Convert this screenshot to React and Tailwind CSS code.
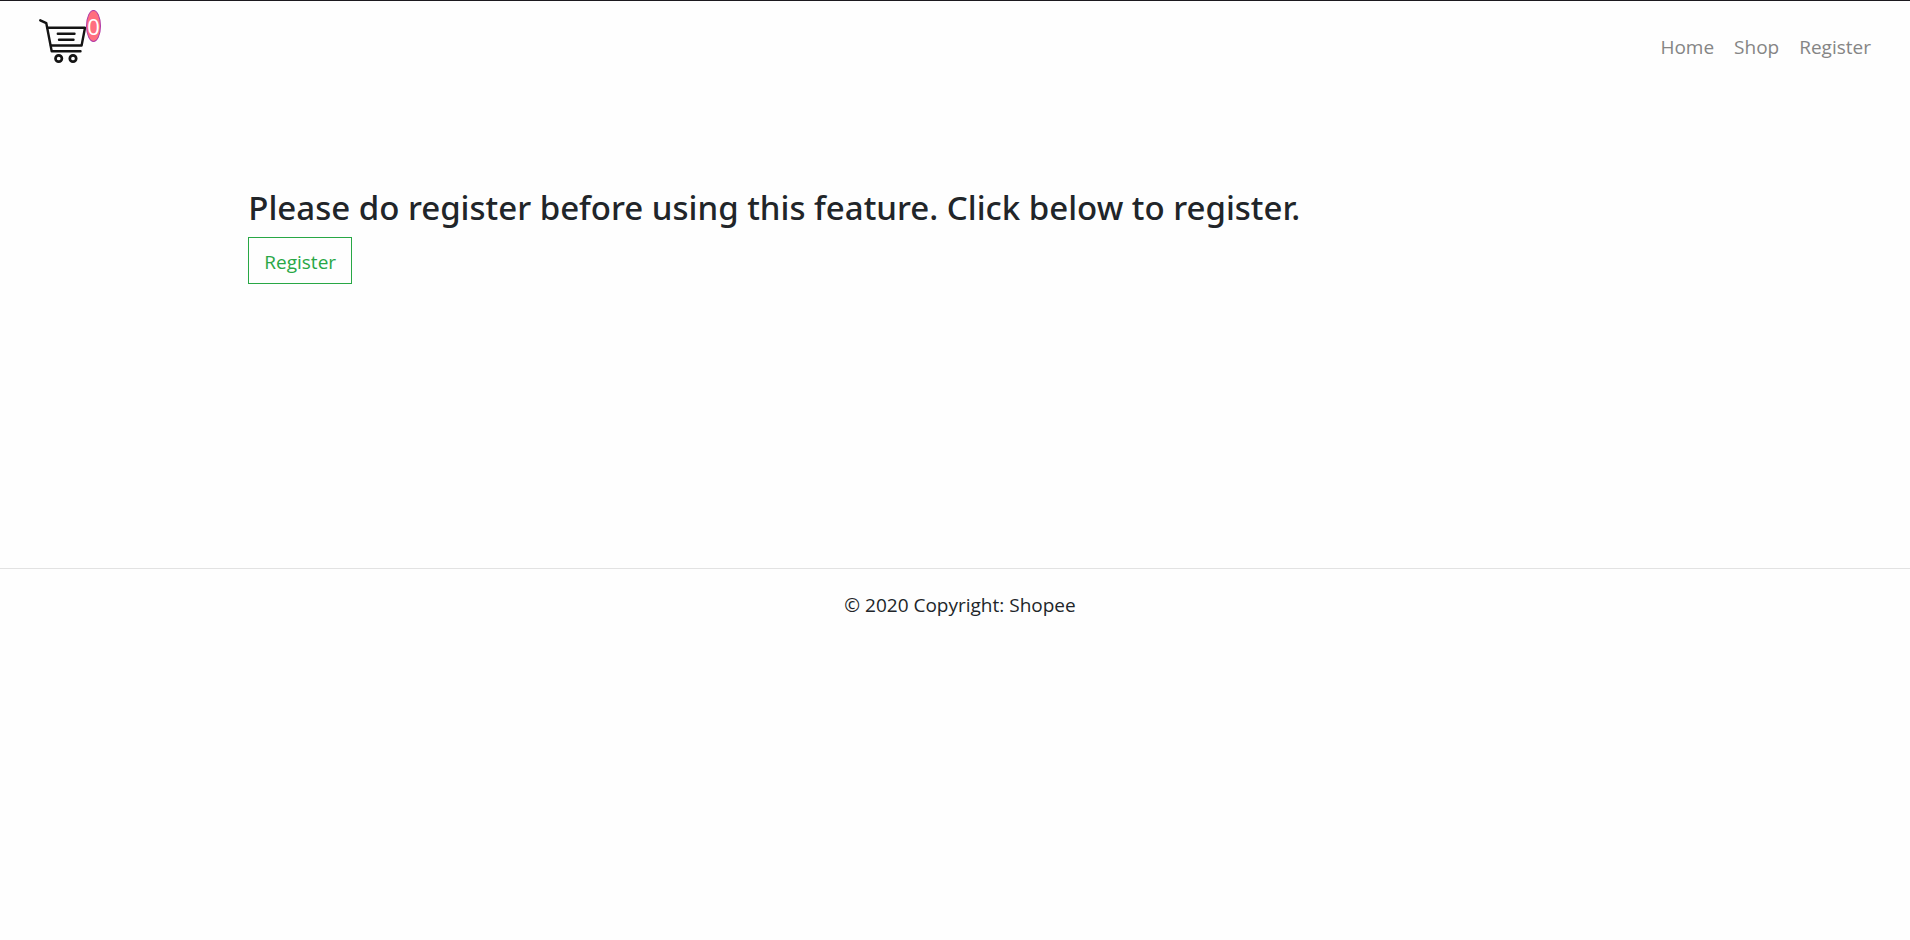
const navLinks = ["Home", "Shop", "Register"];

function CartIcon() {
  return (
    <svg
      width="47"
      height="46"
      viewBox="0 0 47 46"
      fill="none"
      stroke="#141414"
      strokeWidth="2.4"
      strokeLinecap="round"
      strokeLinejoin="round"
      aria-hidden="true"
    >
      <path d="M1.3 2.3 7.3 5.2 12.7 33.3H41.5" />
      <path d="M8.5 9.8H46L42.6 27.5H12" />
      <path d="M18.8 15.8H35.5M20 21.8H34.5" />
      <circle cx="19.7" cy="40.5" r="3.2" strokeWidth="2.7" />
      <circle cx="34" cy="40.5" r="3.2" strokeWidth="2.7" />
    </svg>
  );
}

export default function App() {
  return (
    <div className="min-h-screen border-t border-[#1c1a1f] bg-[#fefefe] font-['Open_Sans',sans-serif] text-[19px] leading-[30px] text-[#212529]">
      <header className="flex h-[92px] justify-between px-[39px]">
        <a href="#cart" aria-label="Cart" className="flex items-start pt-[9px]">
          <span className="pt-[8px]">
            <CartIcon />
          </span>
          <span className="flex h-[32px] w-[15px] items-center justify-center rounded-[50%] border border-[#b03aa8] bg-[#ff6f7f] text-[22px] text-white">
            0
          </span>
        </a>
        <nav className="flex items-center gap-5 text-[#858585]">
          {navLinks.map((label) => (
            <a key={label} href={"#" + label.toLowerCase()}>
              {label}
            </a>
          ))}
        </nav>
      </header>
      <main className="h-[475px] px-[13%] pt-[94px]">
        <h1 className="font-['Noto_Sans',sans-serif] text-[33px] leading-[42px] font-medium">
          Please do register before using this feature. Click below to register.
        </h1>
        <button
          type="button"
          className="mt-[8px] h-[47px] border border-[#28a745] px-[15px] pt-[3px] text-[#28a745]"
        >
          Register
        </button>
      </main>
      <footer className="border-t border-[#e2e2e2] pt-[21px] pl-[10px] text-center">
        © 2020 Copyright: Shopee
      </footer>
    </div>
  );
}
